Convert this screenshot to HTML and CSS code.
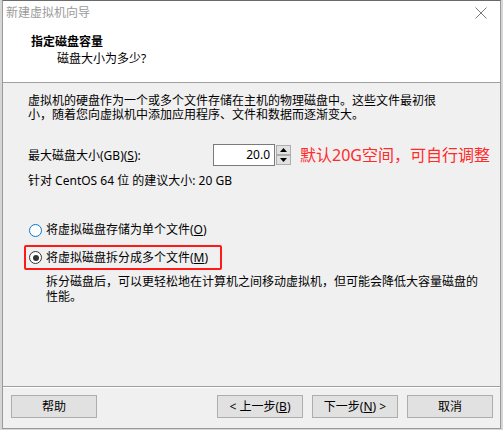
FILE: index.html
```html
<!DOCTYPE html>
<html lang="zh-CN">
<head>
<meta charset="utf-8">
<title>新建虚拟机向导</title>
<link rel="stylesheet" href="styles.css">
</head>
<body>
<div class="window">
  <div class="header">
    <div class="titlebar">
      <span class="title">新建虚拟机向导</span>
      <svg class="close" width="12" height="12" viewBox="0 0 12 12"><path d="M0.5 0.5 L11.5 11.5 M11.5 0.5 L0.5 11.5" stroke="#7a7a7a" stroke-width="1" fill="none"/></svg>
    </div>
    <div class="heading">指定磁盘容量</div>
    <div class="subheading">磁盘大小为多少?</div>
  </div>
  <div class="content">
    <p class="para">虚拟机的硬盘作为一个或多个文件存储在主机的物理磁盘中。这些文件最初很<br>小，随着您向虚拟机中添加应用程序、文件和数据而逐渐变大。</p>
    <div class="size-row">
      <span class="size-label">最大磁盘大小(GB)(<u>S</u>):</span>
      <span class="spin-input">20.0</span>
      <span class="spin-buttons">
        <span class="spin-btn"><svg width="7" height="4" viewBox="0 0 7 4"><path d="M3.5 0 L7 4 L0 4 Z" fill="#000"/></svg></span>
        <span class="spin-btn"><svg width="7" height="4" viewBox="0 0 7 4"><path d="M0 0 L7 0 L3.5 4 Z" fill="#000"/></svg></span>
      </span>
      <span class="note">默认20G空间，可自行调整</span>
    </div>
    <div class="hint">针对 CentOS 64 位 的建议大小: 20 GB</div>
    <div class="radio-row first">
      <span class="radio focus"></span>
      <span>将虚拟磁盘存储为单个文件(<u>O</u>)</span>
    </div>
    <div class="highlight">
      <div class="radio-row">
        <span class="radio checked"></span>
        <span>将虚拟磁盘拆分成多个文件(<u>M</u>)</span>
      </div>
    </div>
    <p class="desc">拆分磁盘后，可以更轻松地在计算机之间移动虚拟机，但可能会降低大容量磁盘的<br>性能。</p>
  </div>
  <div class="footer">
    <button class="btn">帮助</button>
    <div class="btn-group">
      <button class="btn">&lt; 上一步(<u>B</u>)</button>
      <button class="btn">下一步(<u>N</u>) &gt;</button>
      <button class="btn">取消</button>
    </div>
  </div>
</div>
</body>
</html>
```

FILE: styles.css
```css
* { box-sizing: border-box; }

html, body {
  margin: 0;
  padding: 0;
}

body {
  width: 503px;
  height: 430px;
  background: #d6d6d6;
  font-family: "Noto Sans", "Noto Sans CJK SC", sans-serif;
  font-size: 12px;
  color: #000;
  overflow: hidden;
}

.window {
  margin-left: 2px;
  width: 499px;
  height: 429px;
  border: 1px solid #9a9a9a;
  border-top-color: #6a6a6a;
  background: #f0f0f0;
  display: flex;
  flex-direction: column;
}

.header {
  background: #fff;
  height: 82px;
  border-bottom: 1px solid #a0a0a0;
}

.titlebar {
  height: 24px;
  display: flex;
  align-items: center;
  justify-content: space-between;
  padding: 0 13px 0 3px;
}

.title {
  color: #9a9a9a;
  line-height: 24px;
}

.close { display: block; }

.heading {
  margin-top: 9px;
  padding-left: 28px;
  font-weight: bold;
  line-height: 16px;
}

.subheading {
  margin-top: 1px;
  padding-left: 54px;
  line-height: 16px;
}

.content {
  flex: 1;
  padding-left: 25px;
}

.para {
  margin: 11px 0 0;
  line-height: 14px;
}

.size-row {
  margin-top: 22px;
  height: 22px;
  display: flex;
  align-items: center;
}

.size-label {
  width: 185px;
}

.spin-input {
  width: 62px;
  height: 22px;
  border: 1px solid #7a7a7a;
  background: #fff;
  text-align: right;
  padding-right: 4px;
  line-height: 20px;
}

.spin-buttons {
  display: flex;
  flex-direction: column;
  justify-content: space-between;
  height: 20px;
  margin-left: 1px;
  width: 15px;
}

.spin-btn {
  height: 10px;
  border: 1px solid #adadad;
  background: #e1e1e1;
  display: flex;
  align-items: center;
  justify-content: center;
}

.spin-btn svg { display: block; }

.note {
  margin-left: 9px;
  color: #ff2a2a;
  font-size: 16px;
  line-height: 22px;
}

.hint {
  margin-top: 8px;
  line-height: 14px;
}

.radio-row {
  display: flex;
  align-items: center;
  height: 16px;
  line-height: 16px;
}

.radio-row.first {
  margin-top: 34px;
}

.radio {
  width: 13px;
  height: 13px;
  border-radius: 50%;
  border: 1px solid #333;
  background: #fff;
  margin-left: 1px;
  margin-right: 4px;
  position: relative;
  flex: none;
}

.radio.focus {
  border-color: #0078d7;
}

.radio.checked::after {
  content: "";
  position: absolute;
  left: 2.5px;
  top: 2.5px;
  width: 6px;
  height: 6px;
  border-radius: 50%;
  background: #333;
}

.highlight {
  margin-top: 7px;
  margin-left: -4px;
  width: 198px;
  height: 25px;
  border: 2px solid #ff1a1a;
  border-radius: 2px;
  padding-left: 2px;
  display: flex;
  align-items: center;
}

.desc {
  margin: 4px 0 0;
  padding-left: 18px;
  line-height: 15px;
}

.footer {
  height: 42px;
  border-top: 1px solid #a0a0a0;
  box-shadow: inset 0 1px 0 #fff;
  padding: 8px 7px 0 8px;
  display: flex;
  justify-content: space-between;
  align-items: flex-start;
}

.btn-group {
  display: flex;
  gap: 9px;
}

.btn {
  width: 86px;
  height: 23px;
  border: 1px solid #adadad;
  background: #e1e1e1;
  font-family: "Noto Sans", "Noto Sans CJK SC", sans-serif;
  font-size: 12px;
  color: #000;
  padding: 0;
  line-height: 21px;
}
```
